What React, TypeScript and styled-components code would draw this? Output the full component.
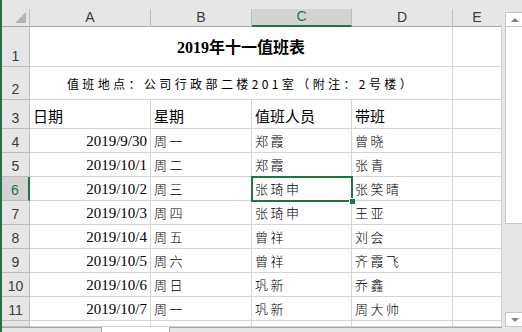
import styled, { createGlobalStyle, css } from "styled-components";

const GlobalStyle = createGlobalStyle`
  html, body {
    margin: 0;
    padding: 0;
    background: #e6e6e6;
  }
`;

const GREEN = "#217346";
const GRID = "#d4d4d4";
const HEAD_LINE = "#bdbdbd";
const EDGE = "#a6a6a6";

const SANS = `"Liberation Sans", Arial, sans-serif`;
const CJK = `"Noto Sans CJK SC", "Noto Sans", sans-serif`;
const SERIF = `"Liberation Serif", "Noto Sans CJK SC", serif`;

const columns = ["A", "B", "C", "D", "E"];

const rows = [
  { date: "2019/9/30", day: "周一", duty: "郑霞", lead: "曾晓" },
  { date: "2019/10/1", day: "周二", duty: "郑霞", lead: "张青" },
  { date: "2019/10/2", day: "周三", duty: "张琦申", lead: "张笑晴" },
  { date: "2019/10/3", day: "周四", duty: "张琦申", lead: "王亚" },
  { date: "2019/10/4", day: "周五", duty: "曾祥", lead: "刘会" },
  { date: "2019/10/5", day: "周六", duty: "曾祥", lead: "齐霞飞" },
  { date: "2019/10/6", day: "周日", duty: "巩新", lead: "乔鑫" },
  { date: "2019/10/7", day: "周一", duty: "巩新", lead: "周大帅" },
];

const Window = styled.div`
  width: 522px;
  height: 332px;
  display: flex;
  background: #e6e6e6;
  overflow: hidden;
`;

const GreenEdge = styled.div`
  width: 2px;
  flex: none;
  background: ${GREEN};
`;

const Body = styled.div`
  flex: 1;
  display: flex;
  flex-direction: column;
`;

const Main = styled.div`
  height: 327px;
  display: flex;
`;

const SheetArea = styled.div`
  width: 500px;
  padding-top: 9px;
  display: flex;
  flex-direction: column;
  overflow: hidden;
`;

const Grid = styled.div`
  display: grid;
  grid-template-columns: 28px 121px 101px 100px 101px 49px;
  grid-template-rows: 18px 40px 33px 29px repeat(8, 24px) 6px;
  background: #fff;
  border-right: 1px solid ${EDGE};
  width: 500px;
  box-sizing: border-box;
`;

const Corner = styled.div`
  background: #e6e6e6;
  border-right: 1px solid ${HEAD_LINE};
  border-bottom: 1px solid ${EDGE};
  position: relative;
  &::after {
    content: "";
    position: absolute;
    right: 3px;
    bottom: 3px;
    width: 0;
    height: 0;
    border-left: 11px solid transparent;
    border-bottom: 11px solid #b4b4b4;
  }
`;

const ColHead = styled.div<{ $active?: boolean; $last?: boolean }>`
  display: flex;
  align-items: flex-end;
  justify-content: center;
  padding-bottom: 1px;
  box-sizing: border-box;
  background: ${(p) => (p.$active ? "#d3d3d3" : "#e6e6e6")};
  color: ${(p) => (p.$active ? GREEN : "#3c3c3c")};
  font: 14px/16px ${SANS};
  border-right: 1px solid ${(p) => (p.$last ? "transparent" : HEAD_LINE)};
  border-bottom: ${(p) => (p.$active ? `2px solid ${GREEN}` : `1px solid ${EDGE}`)};
`;

const RowHead = styled.div<{ $active?: boolean }>`
  display: flex;
  align-items: flex-end;
  justify-content: center;
  padding-bottom: 2px;
  box-sizing: border-box;
  overflow: hidden;
  background: ${(p) => (p.$active ? "#d3d3d3" : "#e6e6e6")};
  color: ${(p) => (p.$active ? GREEN : "#3c3c3c")};
  font: 14px/16px ${SANS};
  border-bottom: 1px solid ${HEAD_LINE};
  border-right: ${(p) => (p.$active ? `2px solid ${GREEN}` : `1px solid ${HEAD_LINE}`)};
`;

const Cell = styled.div<{
  $align?: "left" | "right" | "center";
  $span?: number;
  $selected?: boolean;
}>`
  display: flex;
  align-items: center;
  box-sizing: border-box;
  border-right: 1px solid ${GRID};
  border-bottom: 1px solid ${GRID};
  color: #000;
  white-space: nowrap;
  overflow: visible;
  justify-content: ${(p) =>
    p.$align === "right" ? "flex-end" : p.$align === "center" ? "center" : "flex-start"};
  padding: ${(p) => (p.$align === "right" ? "0 3px 0 0" : p.$align === "center" ? "0" : "0 0 0 3px")};
  ${(p) => p.$span && css`grid-column: span ${p.$span};`}
  ${(p) =>
    p.$selected &&
    css`
      position: relative;
      z-index: 1;
      outline: 2px solid ${GREEN};
      outline-offset: -1px;
      &::after {
        content: "";
        position: absolute;
        right: -4px;
        bottom: -4px;
        width: 5px;
        height: 5px;
        background: ${GREEN};
        border-left: 1px solid #fff;
        border-top: 1px solid #fff;
      }
    `}
`;

const Title = styled.span`
  font: bold 16px/18px ${SERIF};
  margin-top: 3px;
`;

const Location = styled.span`
  font: 12px/16px ${CJK};
  letter-spacing: 3.4px;
  margin-top: 2px;
`;

const HeaderText = styled.span`
  font: 15px/18px ${CJK};
  margin-top: 3px;
`;

const DateText = styled.span`
  font: 15px/18px ${SERIF};
`;

const NameText = styled.span`
  font: 13px/18px ${CJK};
  font-weight: 300;
  letter-spacing: 2.5px;
`;

const ScrollArea = styled.div`
  width: 20px;
  padding: 12px 2px 0 3px;
  display: flex;
  flex-direction: column;
`;

const ScrollButton = styled.div<{ $down?: boolean }>`
  height: 15px;
  box-sizing: border-box;
  border: 1px solid #c6c6c6;
  background: #fff;
  display: flex;
  align-items: center;
  justify-content: center;
  margin-top: ${(p) => (p.$down ? "auto" : "0")};
  &::before {
    content: "";
    width: 0;
    height: 0;
    border-left: 4px solid transparent;
    border-right: 4px solid transparent;
    ${(p) =>
      p.$down
        ? css`border-top: 4px solid #808080;`
        : css`border-bottom: 4px solid #808080;`}
  }
`;

const Thumb = styled.div`
  height: 197px;
  box-sizing: border-box;
  border: 1px solid #c6c6c6;
  border-top: none;
  background: #fff;
`;

const TabBar = styled.div`
  height: 5px;
  display: flex;
`;

const TabStrip = styled.div<{ $side: "left" | "right" }>`
  background: #e6e6e6;
  border-top: 1px solid ${EDGE};
  ${(p) =>
    p.$side === "left"
      ? css`width: 99px; border-right: 1px solid ${EDGE};`
      : css`width: 332px; border-left: 1px solid ${EDGE};`}
`;

const ActiveTab = styled.div`
  width: 67px;
  background: #fff;
`;

export default function App() {
  return (
    <>
      <GlobalStyle />
      <Window>
        <GreenEdge />
        <Body>
          <Main>
            <SheetArea>
              <Grid>
                <Corner />
                {columns.map((c, i) => (
                  <ColHead key={c} $active={c === "C"} $last={i === columns.length - 1}>
                    {c}
                  </ColHead>
                ))}

                <RowHead>1</RowHead>
                <Cell $span={4} $align="center">
                  <Title>2019年十一值班表</Title>
                </Cell>
                <Cell />

                <RowHead>2</RowHead>
                <Cell $span={4} $align="center">
                  <Location>值班地点：公司行政部二楼201室（附注：2号楼）</Location>
                </Cell>
                <Cell />

                <RowHead>3</RowHead>
                <Cell><HeaderText>日期</HeaderText></Cell>
                <Cell><HeaderText>星期</HeaderText></Cell>
                <Cell><HeaderText>值班人员</HeaderText></Cell>
                <Cell><HeaderText>带班</HeaderText></Cell>
                <Cell />

                {rows.map((r, i) => (
                  <RowGroup key={i} n={i + 4} row={r} />
                ))}

                {/* row 12 is cut off by the tab bar, only its top edge shows */}
                <RowHead />
                <Cell />
                <Cell />
                <Cell />
                <Cell />
                <Cell />
              </Grid>
            </SheetArea>
            <ScrollArea>
              <ScrollButton />
              <Thumb />
              <ScrollButton $down />
            </ScrollArea>
          </Main>
          <TabBar>
            <TabStrip $side="left" />
            <ActiveTab />
            <TabStrip $side="right" />
          </TabBar>
        </Body>
      </Window>
    </>
  );
}

function RowGroup({ n, row }: { n: number; row: (typeof rows)[number] }) {
  const active = n === 6;
  return (
    <>
      <RowHead $active={active}>{n}</RowHead>
      <Cell $align="right"><DateText>{row.date}</DateText></Cell>
      <Cell><NameText>{row.day}</NameText></Cell>
      <Cell $selected={active}><NameText>{row.duty}</NameText></Cell>
      <Cell><NameText>{row.lead}</NameText></Cell>
      <Cell />
    </>
  );
}
